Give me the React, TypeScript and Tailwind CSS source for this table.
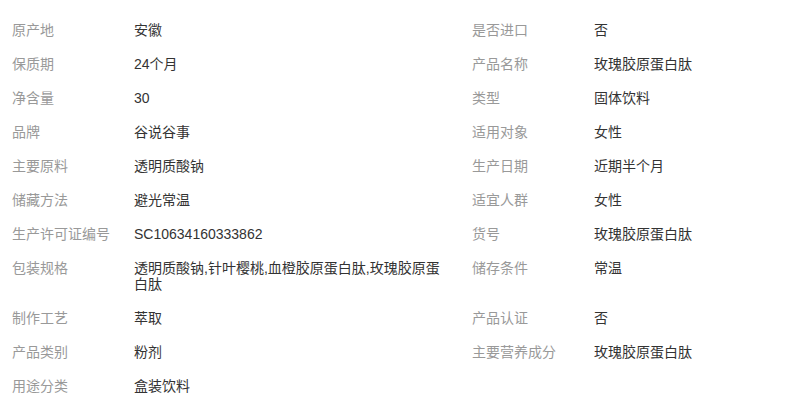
import React from "react";

const items: [string, string][] = [
  ["原产地", "安徽"],
  ["是否进口", "否"],
  ["保质期", "24个月"],
  ["产品名称", "玫瑰胶原蛋白肽"],
  ["净含量", "30"],
  ["类型", "固体饮料"],
  ["品牌", "谷说谷事"],
  ["适用对象", "女性"],
  ["主要原料", "透明质酸钠"],
  ["生产日期", "近期半个月"],
  ["储藏方法", "避光常温"],
  ["适宜人群", "女性"],
  ["生产许可证编号", "SC10634160333862"],
  ["货号", "玫瑰胶原蛋白肽"],
  ["包装规格", "透明质酸钠,针叶樱桃,血橙胶原蛋白肽,玫瑰胶原蛋白肽"],
  ["储存条件", "常温"],
  ["制作工艺", "萃取"],
  ["产品认证", "否"],
  ["产品类别", "粉剂"],
  ["主要营养成分", "玫瑰胶原蛋白肽"],
  ["用途分类", "盒装饮料"],
];

export default function App() {
  return (
    <div
      className="w-[812px] h-[404px] overflow-hidden bg-white pt-[13px] text-[14px] leading-[16px]"
      style={{ fontFamily: '"Liberation Sans", "Noto Sans CJK SC", sans-serif' }}
    >
      <div className="grid grid-cols-[460px_1fr]">
        {items.map(([k, v], i) => (
          <div key={i} className="flex px-3 py-[9px]">
            <div className="w-[122px] shrink-0 text-[#999999]">{k}</div>
            <div className="w-[312px] text-[#333333] break-words">{v}</div>
          </div>
        ))}
      </div>
    </div>
  );
}
